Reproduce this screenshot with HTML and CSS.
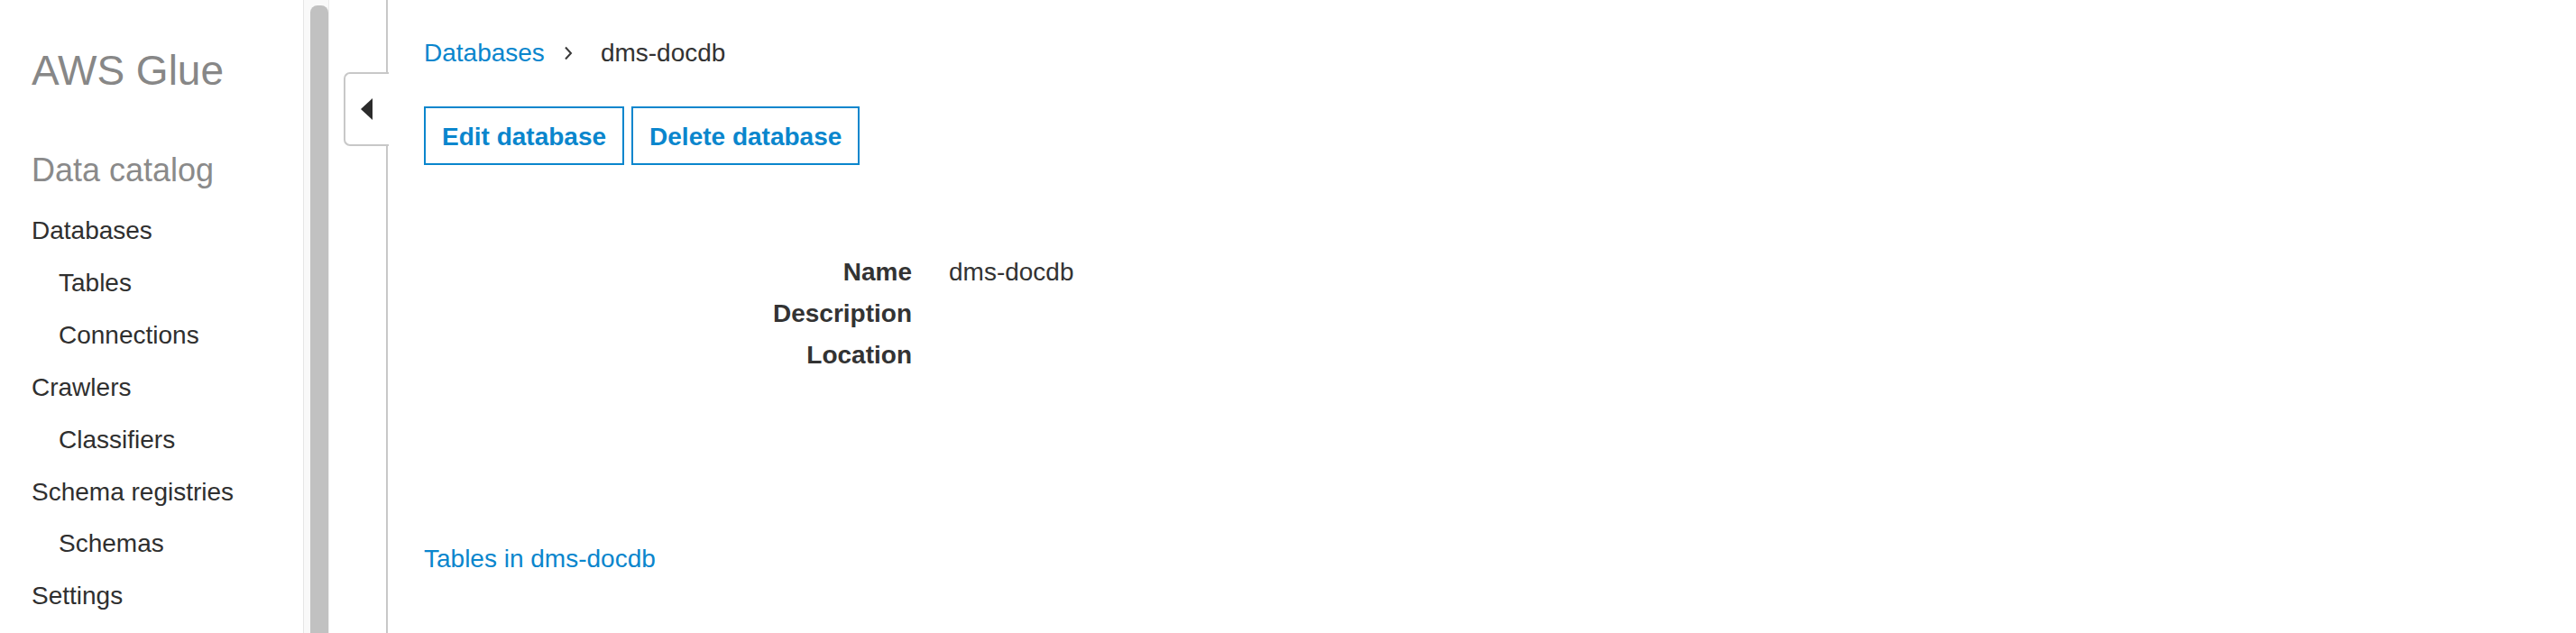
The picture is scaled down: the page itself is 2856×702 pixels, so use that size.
FILE: index.html
```html
<!DOCTYPE html>
<html lang="en">
<head>
<meta charset="utf-8">
<title>AWS Glue - dms-docdb</title>
<link rel="stylesheet" href="styles.css">
</head>
<body>
<div class="app">
  <nav class="sidebar">
    <div class="brand">AWS Glue</div>
    <div class="section">Data catalog</div>
    <ul class="nav">
      <li class="nav-item">Databases</li>
      <li class="nav-item sub">Tables</li>
      <li class="nav-item sub">Connections</li>
      <li class="nav-item">Crawlers</li>
      <li class="nav-item sub">Classifiers</li>
      <li class="nav-item">Schema registries</li>
      <li class="nav-item sub">Schemas</li>
      <li class="nav-item">Settings</li>
    </ul>
  </nav>
  <div class="scrollbar"><div class="thumb"></div></div>
  <div class="gutter"></div>
  <main class="main">
    <button class="collapse-tab" aria-label="Collapse navigation">
      <svg width="13" height="24" viewBox="0 0 13 24"><path d="M13 0 L13 24 L0 12 Z" fill="#2b2b2b"/></svg>
    </button>
    <div class="breadcrumb">
      <a class="crumb-link">Databases</a>
      <svg class="chevron" width="10" height="16" viewBox="0 0 10 16"><path d="M2 1.5 L8 8 L2 14.5" fill="none" stroke="#3a3a3a" stroke-width="2"/></svg>
      <span class="crumb-current">dms-docdb</span>
    </div>
    <div class="actions">
      <button class="btn">Edit database</button>
      <button class="btn">Delete database</button>
    </div>
    <dl class="details">
      <div class="row"><dt>Name</dt><dd>dms-docdb</dd></div>
      <div class="row"><dt>Description</dt><dd></dd></div>
      <div class="row"><dt>Location</dt><dd></dd></div>
    </dl>
    <a class="tables-link">Tables in dms-docdb</a>
  </main>
</div>
</body>
</html>
```

FILE: styles.css
```css
* { box-sizing: border-box; }
html, body { margin: 0; padding: 0; background: #fff; }
body {
  font-family: "Liberation Sans", Arial, Helvetica, sans-serif;
  color: #333;
  width: 2856px;
  height: 702px;
  overflow: hidden;
}
.app {
  display: flex;
  height: 702px;
}
.sidebar {
  width: 336px;
  flex: none;
  padding-left: 35px;
  padding-top: 51px;
}
.brand {
  font-size: 46px;
  line-height: 54px;
  color: #878787;
}
.section {
  font-size: 36px;
  line-height: 44px;
  color: #8a8a8a;
  margin-top: 62px;
}
.nav {
  list-style: none;
  margin: 16px 0 0;
  padding: 0;
}
.nav-item {
  font-size: 28px;
  line-height: 57.9px;
  color: #2f2f2f;
  white-space: nowrap;
}
.nav-item.sub { padding-left: 30px; }

.scrollbar {
  width: 29px;
  flex: none;
  background: #f9f9f9;
  border-left: 1px solid #e6e6e6;
  border-right: 1px solid #ececec;
  padding: 6px 0 0 7px;
  display: flex;
}
.thumb {
  width: 16px;
  flex: 1;
  background: #c1c1c1;
  border-radius: 8px 8px 0 0;
  margin-bottom: -20px;
}
.gutter {
  width: 63px;
  flex: none;
}
.main {
  position: relative;
  flex: 1;
  border-left: 2px solid #c8c8c8;
  padding-left: 40px;
  padding-top: 43px;
}
.collapse-tab {
  position: absolute;
  left: -49px;
  top: 80px;
  width: 50px;
  height: 82px;
  background: #fff;
  border: 2px solid #c8c8c8;
  border-right: none;
  border-radius: 7px 0 0 7px;
  padding: 0 0 0 17px;
  display: flex;
  align-items: center;
  margin: 0;
}
.collapse-tab svg { display: block; }
.breadcrumb {
  display: flex;
  align-items: center;
  font-size: 28px;
  line-height: 32px;
}
.crumb-link { color: #0a86cd; }
.chevron { margin: 0 31px 0 21px; display: block; }
.crumb-current { color: #333; }
.actions {
  display: flex;
  gap: 8px;
  margin-top: 43px;
}
.btn {
  font-family: inherit;
  font-size: 28px;
  line-height: 32px;
  font-weight: bold;
  color: #0a86cd;
  background: #fff;
  border: 2px solid #0a86cd;
  border-radius: 0;
  padding: 16px 18px 13px;
  margin: 0;
  height: 65px;
}
.details {
  margin: 96px 0 0;
  padding: 0;
}
.row {
  display: flex;
  font-size: 28px;
  line-height: 46px;
}
.row dt {
  width: 541px;
  text-align: right;
  font-weight: bold;
  color: #333;
}
.row dd {
  margin: 0 0 0 41px;
  color: #333;
}
.tables-link {
  display: block;
  margin-top: 187px;
  font-size: 28px;
  line-height: 32px;
  color: #0a86cd;
}
```
